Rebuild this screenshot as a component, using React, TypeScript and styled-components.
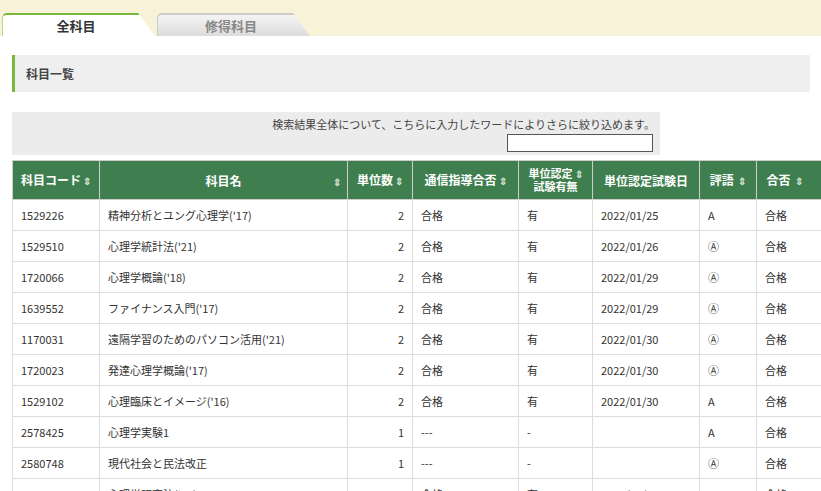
import React from "react";
import styled, { createGlobalStyle } from "styled-components";

const G = createGlobalStyle`
  html,body{margin:0;padding:0;overflow:hidden;background:#fff;}
  body{font-family:"Noto Sans CJK JP","Liberation Sans",sans-serif;color:#333;font-size:11px;}
`;
const Top = styled.div`background:#f7f2d8;height:36px;display:flex;align-items:flex-end;padding-left:2px;gap:2px;`;
const Tab = styled.div<{ active?: boolean }>`
  width:153px;height:23px;box-sizing:border-box;position:relative;
  display:flex;align-items:center;justify-content:center;padding-right:6px;
  font-weight:bold;font-size:13px;
  color:${p => p.active ? "#333" : "#888"};
  background:${p => p.active ? "#fff" : "linear-gradient(#f4f4f4,#dcdcdc)"};
  border-top:2px solid ${p => p.active ? "#7ab83c" : "#ccc"};
  border-left:1px solid ${p => p.active ? "#b5d88c" : "#ccc"};
  border-radius:5px 0 0 0;
  clip-path:polygon(0 0,89% 0,100% 100%,0 100%);
`;
const Main = styled.div`padding:19px 11px 0 12px;`;
const Section = styled.div`
  background:#efefef;border-left:3px solid #7ab83c;height:37px;display:flex;align-items:center;
  padding-left:11px;font-weight:bold;font-size:12px;color:#444;
`;
const Search = styled.div`
  margin-top:20px;width:648px;height:43px;background:#ececec;box-sizing:border-box;
  display:flex;flex-direction:column;align-items:flex-end;padding:4px 5px 0 0;font-size:11px;color:#444;
`;
const Input = styled.div`width:144px;height:16px;border:1px solid #555;background:#fff;margin-top:2px;margin-right:2px;`;
const Table = styled.table`margin-top:5px;border-collapse:collapse;width:830px;table-layout:fixed;`;
const Th = styled.th<{ align?: string }>`
  height:38px;background:#3f7f4f;color:#fff;font-size:12px;font-weight:bold;
  border:1px solid #ccc;padding:0 4px;text-align:${p => p.align || "center"};line-height:13px;position:relative;
`;
const Sort = styled.span`font-size:10px;color:#cfe0d2;margin-left:2px;`;
const Right = styled.span`position:absolute;right:6px;`;
const Two = styled.div`font-size:11px;line-height:13px;`;
const Td = styled.td<{ right?: boolean }>`
  height:30px;border:1px solid #ddd;padding:0 8px;text-align:${p => p.right ? "right" : "left"};
  font-size:11px;color:#333;white-space:nowrap;overflow:hidden;
`;
const cols = [87, 248, 65, 106, 74, 107, 57, 86];
const rows = [
  ["1529226","精神分析とユング心理学('17)","2","合格","有","2022/01/25","A","合格"],
  ["1529510","心理学統計法('21)","2","合格","有","2022/01/26","Ⓐ","合格"],
  ["1720066","心理学概論('18)","2","合格","有","2022/01/29","Ⓐ","合格"],
  ["1639552","ファイナンス入門('17)","2","合格","有","2022/01/29","Ⓐ","合格"],
  ["1170031","遠隔学習のためのパソコン活用('21)","2","合格","有","2022/01/30","Ⓐ","合格"],
  ["1720023","発達心理学概論('17)","2","合格","有","2022/01/30","Ⓐ","合格"],
  ["1529102","心理臨床とイメージ('16)","2","合格","有","2022/01/30","A","合格"],
  ["2578425","心理学実験1","1","---","-","","A","合格"],
  ["2580748","現代社会と民法改正","1","---","-","","Ⓐ","合格"],
  ["1529048","心理学研究法('20)","2","合格","有","2022/01/31","A","合格"],
];
const S = () => <Sort>⇕</Sort>;
export default function App() {
  return (<>
    <G />
    <Top><Tab active>全科目</Tab><Tab>修得科目</Tab></Top>
    <Main>
      <Section>科目一覧</Section>
      <Search>検索結果全体について、こちらに入力したワードによりさらに絞り込めます。<Input /></Search>
      <Table>
        <colgroup>{cols.map((w, i) => <col key={i} style={{ width: w }} />)}</colgroup>
        <thead><tr>
          <Th>科目コード<S /></Th>
          <Th>科目名<Right><S /></Right></Th>
          <Th>単位数<S /></Th>
          <Th>通信指導合否<S /></Th>
          <Th><Two>単位認定<S /><br />試験有無</Two></Th>
          <Th>単位認定試験日</Th>
          <Th>評語 <S /></Th>
          <Th align="left">&nbsp;&nbsp;合否 <S /></Th>
        </tr></thead>
        <tbody>{rows.map((r, i) => <tr key={i}>{r.map((c, j) => <Td key={j} right={j === 2}>{c}</Td>)}</tr>)}</tbody>
      </Table>
    </Main>
  </>);
}
